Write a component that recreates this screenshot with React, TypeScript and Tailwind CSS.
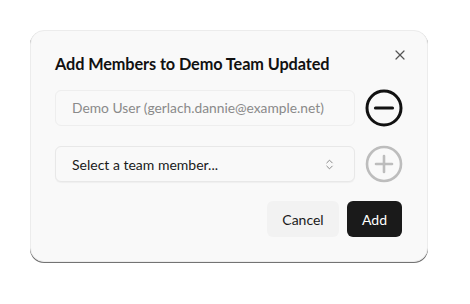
import { X, ChevronsUpDown } from 'lucide-react'

export default function App() {
  return (
    <div className="w-[470px] h-[304px] bg-white pt-[30px] pl-[30px] font-['Lato',sans-serif]">
      <div className="relative w-[398px] h-[232px] rounded-[14px] border border-[#ececec] bg-[#f9f9f9] px-6 pt-[21px] shadow-[0_1px_0_rgba(0,0,0,0.55)]">
        <button className="absolute right-[19px] top-[16px] text-[#555]">
          <X className="w-[16px] h-[16px]" strokeWidth={1.8} />
        </button>
        <h2 className="text-[16.3px] font-bold text-[#111] leading-[24px] tracking-[-0.1px]">
          Add Members to Demo Team Updated
        </h2>

        <div className="mt-[13px] flex items-center gap-[10px]">
          <div className="w-[300px] h-[36px] rounded-md border border-[#eeeeee] bg-[#f9f9f9] px-4 flex items-center text-[13.8px] text-[#8a8a8a]">
            Demo User (gerlach.dannie@example.net)
          </div>
          <svg width="38" height="38" viewBox="0 0 38 38" className="shrink-0">
            <circle cx="19" cy="19" r="17" fill="none" stroke="#111" strokeWidth="3" />
            <line x1="10.5" y1="19" x2="27.5" y2="19" stroke="#111" strokeWidth="3.2" strokeLinecap="round" />
          </svg>
        </div>

        <div className="mt-[18px] flex items-center gap-[10px]">
          <div className="w-[300px] h-[36px] rounded-md border border-[#e8e8e8] bg-[#f9f9f9] pl-4 pr-[18px] flex items-center justify-between text-[14px] text-[#1a1a1a] shadow-[0_1px_1px_rgba(0,0,0,0.04)]">
            <span>Select a team member...</span>
            <ChevronsUpDown className="w-[13px] h-[13px] text-[#777]" strokeWidth={1.6} />
          </div>
          <svg width="38" height="38" viewBox="0 0 38 38" className="shrink-0">
            <circle cx="19" cy="19" r="17" fill="none" stroke="#bdbdbd" strokeWidth="2.6" />
            <line x1="11" y1="19" x2="27" y2="19" stroke="#bdbdbd" strokeWidth="2.6" strokeLinecap="round" />
            <line x1="19" y1="11" x2="19" y2="27" stroke="#bdbdbd" strokeWidth="2.6" strokeLinecap="round" />
          </svg>
        </div>

        <div className="mt-[18px] flex justify-end gap-2 pr-[1px]">
          <button className="h-[36px] w-[72px] rounded-md bg-[#f2f2f2] text-[14px] text-[#1a1a1a]">Cancel</button>
          <button className="h-[36px] w-[55px] rounded-md bg-[#1a1a1a] text-[14px] text-white">Add</button>
        </div>
      </div>
    </div>
  )
}
